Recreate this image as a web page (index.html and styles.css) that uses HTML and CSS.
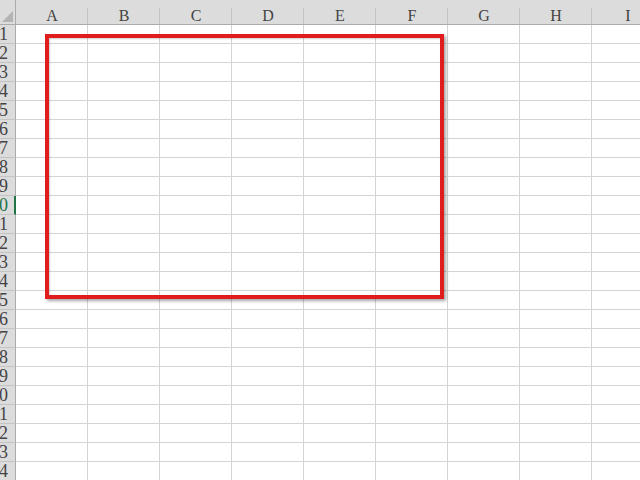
FILE: index.html
```html
<!DOCTYPE html>
<html>

<head>
    <title>Sheet1</title>
    <link rel="stylesheet" href="styles.css">
</head>

<body>
    <div class="sheet">
        <div class="grid">
            <div class="corner"><div class="corner-mark"></div></div>
            <div class="col-head">A</div>
            <div class="col-head">B</div>
            <div class="col-head">C</div>
            <div class="col-head">D</div>
            <div class="col-head">E</div>
            <div class="col-head">F</div>
            <div class="col-head">G</div>
            <div class="col-head">H</div>
            <div class="col-head">I</div>
        </div>
        <div class="grid" id="rows"></div>
        <div class="highlight-box"></div>
    </div>
    <script>
        var rows = document.getElementById('rows');
        var html = '';
        for (var r = 1; r <= 24; r++) {
            var cls = r === 10 ? 'row-head active' : 'row-head';
            html += '<div class="' + cls + '"><span>' + r + '</span></div>';
            for (var c = 0; c < 9; c++) {
                html += '<div class="cell"></div>';
            }
        }
        rows.innerHTML = html;
    </script>
</body>

</html>
```

FILE: styles.css
```css
html,
body {
    margin: 0;
    padding: 0;
    background-color: #ffffff;
    overflow: hidden;
}

.sheet {
    position: relative;
    width: 640px;
    height: 480px;
    overflow: hidden;
    font-family: "Liberation Serif", "DejaVu Serif", serif;
    font-size: 16px;
    color: #444444;
}

.grid {
    display: grid;
    grid-template-columns: 16px repeat(9, 72px);
    grid-auto-rows: 19px;
    width: 664px;
}

.grid:first-child {
    grid-auto-rows: 25px;
}

.corner {
    box-sizing: border-box;
    background-color: #dcdcdc;
    border-right: 1px solid #ababab;
    border-bottom: 1px solid #ababab;
    display: flex;
    align-items: flex-end;
    justify-content: flex-end;
    padding: 0 2px 2px 0;
}

.corner-mark {
    width: 11px;
    height: 11px;
    background-color: #b4b4b4;
    clip-path: polygon(100% 0, 100% 100%, 0 100%);
}

.col-head {
    box-sizing: border-box;
    background: linear-gradient(#c4c4c4, #c4c4c4) right 8px / 1px 16px no-repeat, #dcdcdc;
    border-bottom: 1px solid #ababab;
    text-align: center;
    line-height: 16px;
    padding-top: 8px;
}

.row-head {
    box-sizing: border-box;
    background-color: #dcdcdc;
    border-right: 1px solid #ababab;
    border-bottom: 1px solid #c4c4c4;
    overflow: hidden;
    display: flex;
    justify-content: flex-end;
    align-items: center;
    padding-right: 7px;
    white-space: nowrap;
    font-size: 18px;
    line-height: 18px;
}

.row-head.active {
    color: #217346;
    border-right: 2px solid #217346;
    padding-right: 6px;
}

.cell {
    box-sizing: border-box;
    border-right: 1px solid #d4d4d4;
    border-bottom: 1px solid #d4d4d4;
}

.highlight-box {
    position: absolute;
    left: 45px;
    top: 34px;
    width: 399px;
    height: 265px;
    box-sizing: border-box;
    border: 4px solid #e01c1c;
    box-shadow: 2px 2px 3px rgba(0, 0, 0, 0.35), inset 1px 1px 2px rgba(0, 0, 0, 0.2);
}
```
